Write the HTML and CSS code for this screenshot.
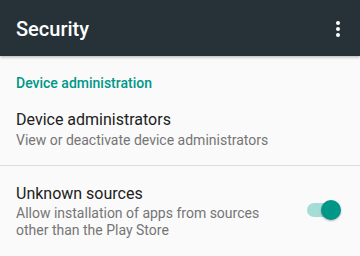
FILE: index.html
```html
<!DOCTYPE html>
<html lang="en">
<head>
    <meta charset="UTF-8">
    <meta name="viewport" content="width=device-width, initial-scale=1.0">
    <title>Security</title>
    <link rel="stylesheet" href="styles.css">
</head>
<body>
    <!-- Toolbar -->
    <header class="appbar">
        <h1 class="appbar-title">Security</h1>
        <div class="overflow-menu">
            <span class="dot"></span>
            <span class="dot"></span>
            <span class="dot"></span>
        </div>
    </header>

    <div class="category">Device administration</div>

    <div class="pref">
        <div class="pref-text">
            <div class="pref-title">Device administrators</div>
            <div class="pref-summary">View or deactivate device administrators</div>
        </div>
    </div>

    <div class="divider"></div>

    <div class="pref pref-switch">
        <div class="pref-text">
            <div class="pref-title">Unknown sources</div>
            <div class="pref-summary wrap">Allow installation of apps from sources other than the Play Store</div>
        </div>
        <div class="switch">
            <div class="switch-track"></div>
            <div class="switch-thumb"></div>
        </div>
    </div>
</body>
</html>
```

FILE: styles.css
```css
body {
    font-family: Roboto, "Liberation Sans", sans-serif;
    margin: 0;
    padding: 0;
    width: 360px;
    height: 256px;
    overflow: hidden;
    background-color: #fafafa;
}

.appbar {
    height: 56px;
    padding: 0 16px;
    display: flex;
    align-items: center;
    justify-content: space-between;
    background-color: #263238;
    box-shadow: 0 1px 3px rgba(0, 0, 0, 0.3);
    position: relative; /* keep shadow above content */
}

.appbar-title {
    margin: 0;
    font-size: 20px;
    font-weight: 500;
    color: #fff;
    padding-top: 2px;
}

.overflow-menu {
    display: flex;
    flex-direction: column;
    gap: 2px;
    margin-right: 4px;
    padding-top: 2px;
}

.dot {
    width: 4px;
    height: 4px;
    border-radius: 50%;
    background-color: #fff;
}

.category {
    padding: 17px 16px 0;
    font-size: 14px;
    line-height: 20px;
    font-weight: 500;
    color: #009688;
}

.pref {
    padding: 16px 16px 16px;
}

.pref-title {
    font-size: 16px;
    line-height: 22px;
    color: #212121;
}

.pref-summary {
    font-size: 14px;
    line-height: 18px;
    color: #757575;
}

.pref-summary.wrap {
    line-height: 17px;
    width: 250px;
}

.divider {
    height: 1px;
    background-color: #dcdcdc;
}

.pref-switch {
    display: flex;
    align-items: center;
    justify-content: space-between;
    padding-top: 17px;
    padding-right: 19px;
}

/* Toggle switch, on state */
.switch {
    position: relative;
    width: 34px;
    height: 20px;
    margin-top: -2px;
}

.switch-track {
    position: absolute;
    top: 3px;
    left: 0;
    width: 30px;
    height: 14px;
    border-radius: 7px;
    background-color: #a6dcd6;
}

.switch-thumb {
    position: absolute;
    top: 0;
    right: 0;
    width: 20px;
    height: 20px;
    border-radius: 50%;
    background-color: #009688;
    box-shadow: 0 1px 2px rgba(0, 0, 0, 0.3);
}
```
